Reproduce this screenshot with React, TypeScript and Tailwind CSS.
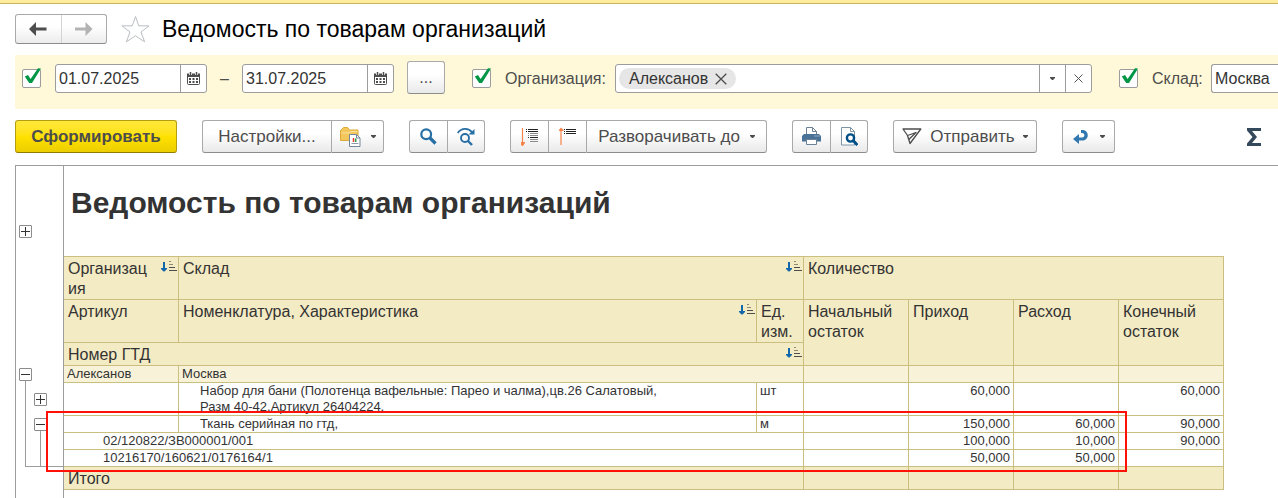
import type { ReactNode } from "react";

const BUTTON =
  "border border-[#a9a9a9] border-b-[#8c8c8c] bg-linear-to-b from-white from-40% to-[#e9e9e9] text-[#4d4d4d] flex items-center justify-center";

function Caret() {
  return (
    <svg width="5" height="3" viewBox="0 0 5 3" className="shrink-0">
      <path d="M0 0h5v1L3 3H2L0 1z" fill="#4d4d4d" />
    </svg>
  );
}

function Calendar() {
  return (
    <svg width="13" height="13" viewBox="0 0 13 13" fill="none">
      <rect x=".5" y="2.500" width="12" height="10" rx="1" stroke="#4d4d4d" fill="#fff" />
      <path d="M0 1.500h13V5H0z" fill="#4d4d4d" />
      <path d="M3.500 0v3M9.500 0v3" stroke="#fff" strokeWidth="3" />
      <path d="M3.500 0v3M9.500 0v3" stroke="#4d4d4d" strokeWidth="1.500" />
      <path d="M2 7h9M2 10h9" stroke="#4d4d4d" strokeWidth="2" strokeDasharray="2 1.500" />
    </svg>
  );
}

function Cross({ size }: { size: number }) {
  return (
    <svg width={size} height={size} viewBox="0 0 12 12">
      <path d="M.7.7l10.600 10.600M11.300.7L.7 11.300" stroke="#4d4d4d" strokeWidth="1.300" />
    </svg>
  );
}

function CheckBox({ id, label }: { id: string; label?: string }) {
  return (
    <span className="relative block size-[19px] shrink-0">
      <input
        id={id}
        type="checkbox"
        defaultChecked
        aria-label={label}
        className="peer block size-[19px] appearance-none rounded-xs border border-[#9c9c9c] bg-white"
      />
      <svg
        width="19"
        height="19"
        viewBox="0 0 19 19"
        className="pointer-events-none absolute -top-px left-0 hidden overflow-visible peer-checked:block"
      >
        <path d="M2.800 8.500L6 7l2.600 4L16 .2l3 .3L10 15H7.200z" fill="#009646" />
      </svg>
    </span>
  );
}

function DateField({ label, value }: { label: string; value: string }) {
  return (
    <div className="flex h-[29px] w-[152px] shrink-0 rounded-[3px] border border-[#9c9c9c] bg-white">
      <input
        aria-label={label}
        defaultValue={value}
        className="min-w-0 flex-1 bg-transparent pl-[3px] text-base leading-5 text-[#333] outline-none"
      />
      <button
        aria-label="Выбрать дату"
        className="flex w-[26px] items-center justify-center border-l border-[#9c9c9c]"
      >
        <Calendar />
      </button>
    </div>
  );
}

function Group({ children }: { children: ReactNode }) {
  return (
    <div className="flex h-[33px] shrink-0 *:border-r-0 *:first:rounded-l-[3px] *:last:rounded-r-[3px] *:last:border-r">
      {children}
    </div>
  );
}

function SortMark() {
  return (
    <svg width="16" height="11" viewBox="0 0 16 11" className="mt-0.5 shrink-0" aria-hidden="true">
      <path d="M2 1h2v6h2v1L3.500 10.500h-1L0 8V7h2z" fill="#1368ab" />
      <path d="M8 .5h2M8 3.500h4" stroke="#8f8971" />
      <path d="M8 6.500h6M8 9.500h8" stroke="#4d4d4d" />
    </svg>
  );
}

function TreeToggle({ open, label }: { open?: boolean; label: string }) {
  return (
    <button
      aria-label={label}
      aria-expanded={!!open}
      className="flex size-[13px] shrink-0 items-center justify-center rounded-[1px] border border-[#8c8c8c] bg-white"
    >
      <svg width="9" height="9" viewBox="0 0 9 9">
        <path d={open ? "M0 4.500h9" : "M0 4.500h9M4.500 0v9"} stroke="#333" />
      </svg>
    </button>
  );
}

const LINE = "border-r border-b border-[#cbbf80]";
const HEAD = LINE + " bg-[#f3ebc4] pl-1 pt-0.5 text-left align-top text-base leading-5 font-normal";
const CELL = LINE + " p-0 pl-[3px] align-top text-[13px] leading-4";
const NUM = LINE + " p-0 pr-[3px] text-right align-top text-[13px] leading-4";
const SUB = LINE + " bg-[#f8f2d9]";

function Numbers({ values }: { values: string[] }) {
  return (
    <>
      {values.map((v, i) => (
        <td key={i} className={NUM}>
          {v}
        </td>
      ))}
    </>
  );
}

function TreeGutter() {
  return (
    <div className="flex w-12 shrink-0 flex-col border-l border-[#9c9c9c]">
      <div className="flex h-[90px] items-end pb-[18px] pl-[3px]">
        <TreeToggle label="Развернуть заголовок" />
      </div>
      <div className="h-[110px]" />
      <div className="flex h-[17px] flex-col pt-0.5 pl-[3px]">
        <TreeToggle open label="Свернуть Алексанов" />
        <div className="ml-1.5 h-0.5 border-l border-[#9c9c9c]" />
      </div>
      <div className="ml-[9px] flex h-[84px] flex-col border-b border-l border-[#9c9c9c]">
        <div className="flex h-[33px] items-center pl-2">
          <TreeToggle label="Развернуть набор для бани" />
        </div>
        <div className="flex h-[17px] flex-col pt-0.5 pl-2">
          <TreeToggle open label="Свернуть ткань серийную" />
          <div className="ml-1.5 h-0.5 border-l border-[#9c9c9c]" />
        </div>
        <div className="ml-3.5 flex-1 border-l border-[#9c9c9c]" />
      </div>
    </div>
  );
}

function ReportTable() {
  return (
    <table className="w-[1160px] table-fixed border-separate border-spacing-0 border-t border-[#cbbf80]">
      <colgroup>
        <col className="w-[115px]" />
        <col className="w-[578px]" />
        <col className="w-[47px]" />
        <col className="w-[105px]" />
        <col className="w-[105px]" />
        <col className="w-[105px]" />
        <col className="w-[105px]" />
      </colgroup>
      <thead>
        <tr className="h-[43px]">
          <th className={HEAD}>
            <div className="flex justify-between gap-2 pr-px">
              <span className="break-all">Организация</span>
              <SortMark />
            </div>
          </th>
          <th colSpan={2} className={HEAD}>
            <div className="flex justify-between pr-px">
              Склад
              <SortMark />
            </div>
          </th>
          <th colSpan={4} className={HEAD}>
            Количество
          </th>
        </tr>
        <tr className="h-[43px]">
          <th className={HEAD}>Артикул</th>
          <th className={HEAD}>
            <div className="flex justify-between pr-px">
              Номенклатура, Характеристика
              <SortMark />
            </div>
          </th>
          <th className={HEAD}>Ед. изм.</th>
          <th rowSpan={2} className={HEAD}>Начальный остаток</th>
          <th rowSpan={2} className={HEAD}>Приход</th>
          <th rowSpan={2} className={HEAD}>Расход</th>
          <th rowSpan={2} className={HEAD}>Конечный остаток</th>
        </tr>
        <tr className="h-[23px]">
          <th colSpan={3} className={HEAD}>
            <div className="flex justify-between pr-px">
              Номер ГТД
              <SortMark />
            </div>
          </th>
        </tr>
      </thead>
      <tbody>
        <tr className="h-[17px]">
          <td className={CELL + " bg-[#f8f2d9]"}>Алексанов</td>
          <td colSpan={2} className={CELL + " bg-[#f8f2d9]"}>Москва</td>
          <td className={SUB} />
          <td className={SUB} />
          <td className={SUB} />
          <td className={SUB} />
        </tr>
        <tr className="h-[33px]">
          <td className={CELL} />
          <td className={CELL}>
            <div className="ml-[18px] h-8 overflow-hidden">
              Набор для бани (Полотенца вафельные: Парео и чалма),цв.26 Салатовый,
              <br />
              Разм 40-42,Артикул 26404224,
            </div>
          </td>
          <td className={CELL}>шт</td>
          <Numbers values={["", "60,000", "", "60,000"]} />
        </tr>
        <tr className="h-[17px]">
          <td className={CELL} />
          <td className={CELL}>
            <div className="ml-[18px]">Ткань серийная по гтд,</div>
          </td>
          <td className={CELL}>м</td>
          <Numbers values={["", "150,000", "60,000", "90,000"]} />
        </tr>
        <tr className="h-[17px]">
          <td colSpan={3} className={CELL}>
            <div className="ml-9">02/120822/ЗВ000001/001</div>
          </td>
          <Numbers values={["", "100,000", "10,000", "90,000"]} />
        </tr>
        <tr className="h-[17px]">
          <td colSpan={3} className={CELL}>
            <div className="ml-9">10216170/160621/0176164/1</div>
          </td>
          <Numbers values={["", "50,000", "50,000", ""]} />
        </tr>
      </tbody>
      <tfoot>
        <tr className="h-[23px]">
          <th colSpan={3} className={HEAD}>Итого</th>
          <td className={HEAD} />
          <td className={HEAD} />
          <td className={HEAD} />
          <td className={HEAD} />
        </tr>
      </tfoot>
    </table>
  );
}

export default function App() {
  return (
    <div className="flex min-h-screen flex-col overflow-hidden bg-white font-['Liberation_Sans',Arial,sans-serif] text-[#333]">
      <div className="h-1 border-b border-[#c9b35c] bg-[#ffec9c]" />

      <header className="flex items-center px-[15px] pt-2.5">
        <div className="flex h-[30px] w-[92px] overflow-hidden rounded-[3px] border border-[#a9a9a9] border-b-[#8c8c8c] bg-linear-to-b from-white from-40% to-[#ececec]">
          <button aria-label="Назад" className="flex flex-1 items-center justify-center border-r border-[#d4d4d4]">
            <svg width="18" height="14" viewBox="0 0 18 14">
              <path d="M0 7L7 0v5.500h10.500v3H7V14z" fill="#4d4d4d" />
            </svg>
          </button>
          <button aria-label="Вперёд" className="flex flex-1 items-center justify-center">
            <svg width="18" height="14" viewBox="0 0 18 14">
              <path d="M17.500 7l-7-7v5.500H0v3h10.500V14z" fill="#b3b3b3" />
            </svg>
          </button>
        </div>
        <button aria-label="Добавить в избранное" className="ml-3.5">
          <svg width="29" height="28" viewBox="0 0 29 28">
            <path
              d="M14.500 1.500l3.200 9.300 10.300.1-8 6.100 3.600 9.800-9.100-6-9.100 6L9 17 1 10.900l10.300-.1z"
              fill="none"
              stroke="#b9bec4"
            />
          </svg>
        </button>
        <h1 className="ml-3 text-[23px] leading-[30px] text-black">Ведомость по товарам организаций</h1>
      </header>

      <section className="mt-[11px] ml-[15px] h-[54px] bg-[#fff9d9] pt-1.5 pl-[7px] text-base leading-5 text-[#4d4d4d]">
        <div className="flex h-[35px] items-center">
          <CheckBox id="period" label="Период" />
          <div className="ml-3.5 flex items-center">
            <DateField label="Начало периода" value="01.07.2025" />
            <span className="w-[35px] text-center">–</span>
            <DateField label="Конец периода" value="31.07.2025" />
          </div>
          <button aria-label="Выбрать период" className={BUTTON + " ml-[13px] h-[33px] w-[38px] shrink-0 self-start rounded-[3px]"}>
            ...
          </button>
          <div className="ml-[27px] flex min-w-0 flex-1 items-center">
            <CheckBox id="org" />
            <label htmlFor="org" className="ml-3.5 w-[110px] shrink-0">
              Организация:
            </label>
            <div className="flex h-[29px] min-w-0 flex-1 rounded-[3px] border border-[#9c9c9c] bg-white">
              <span className="my-[3px] ml-[3px] flex items-center gap-[7px] rounded-full bg-[#e6e6e6] pr-[9px] pl-2.5 text-[#333]">
                Алексанов
                <button aria-label="Убрать Алексанов">
                  <Cross size={12} />
                </button>
              </span>
              <input aria-label="Организация" className="min-w-0 flex-1 bg-transparent outline-none" />
              <button aria-label="Открыть список" className="flex w-[26px] items-center justify-center border-l border-[#9c9c9c]">
                <Caret />
              </button>
              <button aria-label="Очистить" className="flex w-[26px] items-center justify-center border-l border-[#9c9c9c]">
                <Cross size={9} />
              </button>
            </div>
          </div>
          <div className="ml-[27px] flex shrink-0 items-center">
            <CheckBox id="store" />
            <label htmlFor="store" className="ml-3.5 w-[59px]">
              Склад:
            </label>
            <input
              aria-label="Склад"
              defaultValue="Москва"
              className="h-[29px] w-[67px] rounded-l-[3px] border border-r-0 border-[#9c9c9c] bg-white pl-[3px] text-[#333] outline-none"
            />
          </div>
        </div>
      </section>

      <div className="mt-[11px] flex items-center gap-[25px] px-[15px] text-[17px] leading-5">
        <button className="h-[33px] w-[162px] shrink-0 rounded-[3px] border border-[#b39e10] border-b-[#8f7d00] bg-linear-to-b from-[#ffe83b] via-[#ffe100] to-[#ecce00] font-bold text-[#4d4d4d]">
          Сформировать
        </button>
        <Group>
          <button className={BUTTON + " w-[129px]"}>Настройки...</button>
          <button aria-label="Варианты отчёта" className={BUTTON + " w-[53px] gap-2.5"}>
            <svg width="21" height="21" viewBox="0 0 21 21">
              <path d="M.5 14.500V4.500L3.500 1.500h4L9.500 4h8.500v10.500z" fill="#f3c75c" stroke="#dba93b" />
              <path d="M1.500 7h7.500l2-1.500h6.500" fill="none" stroke="#fbe3a0" />
              <path d="M9.500 8.500h7l3.500 3.500v8.500H9.500z" fill="#fff" stroke="#72879b" />
              <path d="M16.500 8.500V12H20" fill="none" stroke="#72879b" />
              <path d="M13.500 16v-4" stroke="#e03a2f" strokeWidth="1.500" />
              <path d="M15.700 16v-3.500" stroke="#2aa04a" strokeWidth="1.500" />
              <path d="M11.500 17.500h7" stroke="#8a9bab" />
            </svg>
            <Caret />
          </button>
        </Group>
        <Group>
          <button aria-label="Найти" className={BUTTON + " w-[38px]"}>
            <svg width="17" height="17" viewBox="0 0 17 17" fill="none" stroke="#276ea4">
              <circle cx="6.200" cy="6.200" r="4.900" strokeWidth="2.200" />
              <path d="M10 10l5.500 5.500" strokeWidth="3.200" />
            </svg>
          </button>
          <button aria-label="Найти далее" className={BUTTON + " w-[38px]"}>
            <svg width="18" height="19" viewBox="0 0 18 19" fill="none" stroke="#276ea4">
              <path d="M.7 6C4.500.7 11.500.7 15 5.300" strokeWidth="1.800" />
              <path d="M17.500 2v5.500h-6z" fill="#276ea4" stroke="none" />
              <circle cx="8" cy="11" r="4" strokeWidth="1.900" />
              <path d="M11 14l4 4" strokeWidth="2.400" />
            </svg>
          </button>
        </Group>
        <Group>
          <button aria-label="Развернуть группы" className={BUTTON + " w-[38px]"}>
            <svg width="17" height="19" viewBox="0 0 17 19" fill="none">
              <path d="M1.500 1v15" stroke="#f5834a" strokeWidth="1.200" />
              <path d="M-1 15h5v1L2 19H1l-2-3z" fill="#f5834a" />
              <path d="M5 2.500h1M7 2.500h10M5 4.500h1M7 4.500h10M7 10.500h1M9 10.500h8" stroke="#222" />
              <path d="M7 6.500h1M9 6.500h8M7 8.500h1M9 8.500h8M9 12.500h8M9 14.500h8" stroke="#8a8a8a" />
            </svg>
          </button>
          <button aria-label="Свернуть группы" className={BUTTON + " w-[38px]"}>
            <svg width="17" height="19" viewBox="0 0 17 19" fill="none">
              <path d="M2 3v15" stroke="#f5834a" strokeWidth="1.200" />
              <path d="M0 4V3l2-2.500L4.500 3v1z" fill="#f5834a" />
              <path d="M5 2.500h1M7 2.500h10M5 4.500h1M7 4.500h10M5 6.500h1M7 6.500h10" stroke="#222" />
            </svg>
          </button>
          <button className={BUTTON + " w-[181px] gap-2.5"}>
            Разворачивать до
            <Caret />
          </button>
        </Group>
        <Group>
          <button aria-label="Печать" className={BUTTON + " w-[38px]"}>
            <svg width="19" height="19" viewBox="0 0 19 19">
              <path d="M4.500 8V.5h6l4 4V8" fill="#fff" stroke="#6b8196" />
              <path d="M10.500.5v4h4" fill="none" stroke="#6b8196" />
              <path d="M2 7h15l2 2v5.500H0V9z" fill="#4a7296" />
              <path d="M12.500 9h5" stroke="#d7e2ec" strokeDasharray="1 1" />
              <path d="M4.500 12.500h10v5h-10z" fill="#fff" stroke="#6b8196" />
            </svg>
          </button>
          <button aria-label="Предварительный просмотр" className={BUTTON + " w-[38px]"}>
            <svg width="17" height="19" viewBox="0 0 17 19">
              <path d="M.5.5H9.500l4 4v13.500H.5z" fill="#fff" stroke="#7d93a6" />
              <path d="M9.500.5v4h4" fill="none" stroke="#7d93a6" />
              <circle cx="9.500" cy="11" r="3.600" fill="#fff" stroke="#004f86" strokeWidth="2.400" />
              <path d="M12 13.500l4.500 4.500" stroke="#004f86" strokeWidth="3" />
            </svg>
          </button>
        </Group>
        <Group>
          <button className={BUTTON + " w-[144px] gap-2"}>
            <svg width="20" height="17" viewBox="0 0 20 17" fill="none" stroke="#4d4d4d" strokeWidth="1.300">
              <path d="M1 1h17.800L8 15.500 5.500 7.500z" strokeLinejoin="round" />
              <path d="M5.500 7.500L14 4.500 6.800 11.500" strokeLinejoin="round" />
            </svg>
            Отправить
            <Caret />
          </button>
        </Group>
        <Group>
          <button aria-label="Вернуться" className={BUTTON + " w-[53px] gap-3"}>
            <svg width="15" height="14" viewBox="0 0 15 14">
              <path d="M0 9l6-5v3.500h3c3.200 0 3.200-4.500 0-4.500H8V0h1.500c7 0 7 10.500 0 10.500H6V14z" fill="#3278ae" />
            </svg>
            <Caret />
          </button>
        </Group>
        <button aria-label="Сумма" className="ml-auto">
          <svg width="18" height="19" viewBox="0 0 18 19">
            <path d="M2 1h14v3H7l5 6-5 6h9v3H2v-2.500L7.500 10 2 3.500z" fill="#35495c" />
          </svg>
        </button>
      </div>

      <main className="relative mt-3 ml-[15px] flex flex-1 border-t border-[#9c9c9c]">
        <TreeGutter />
        <div className="flex-1 border-l border-[#9c9c9c]">
          <h2 className="h-[90px] pt-[17px] pl-[7px] text-[30px] leading-10 font-bold">
            Ведомость по товарам организаций
          </h2>
          <ReportTable />
        </div>
        <div className="pointer-events-none absolute top-[245px] left-[31px] h-[61px] w-[1081px] border-2 border-[#ff1108]" />
      </main>
    </div>
  );
}
